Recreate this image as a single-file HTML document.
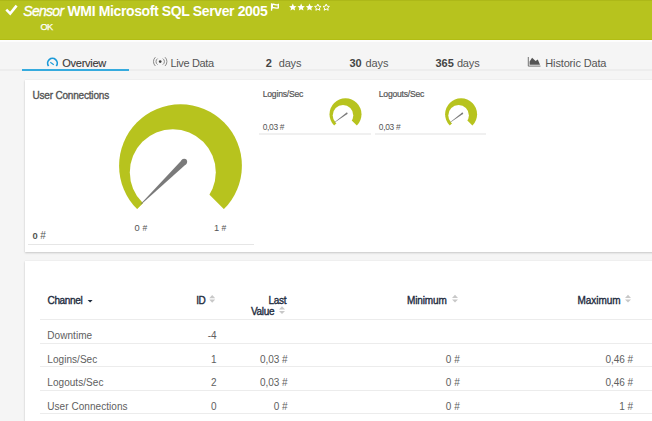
<!DOCTYPE html>
<html><head><meta charset="utf-8">
<style>
html,body{margin:0;padding:0;}
body{width:652px;height:421px;overflow:hidden;position:relative;background:#f5f5f5;font-family:"Liberation Sans",sans-serif;}
.t{position:absolute;white-space:nowrap;}
#hdr{position:absolute;left:0;top:0;width:652px;height:40px;background:#b7c31e;}
.card{position:absolute;background:#fff;box-shadow:0 1px 2px rgba(0,0,0,0.18),0 0 1px rgba(0,0,0,0.08);}
.ln{position:absolute;height:1px;background:#e6e6e6;}
svg{position:absolute;left:0;top:0;}
</style></head><body>
<div id="hdr"></div><div style="position:absolute;left:0;top:0;width:652px;height:1px;background:#adb818"></div><div style="position:absolute;left:0;top:39px;width:652px;height:1px;background:#b2bd14"></div><div style="position:absolute;left:0;top:40px;width:652px;height:2px;background:#fdfdfd"></div>
<svg width="652" height="421" style="z-index:2"><polyline points="6.3,9.6 10.2,13.6 16.6,5.6" fill="none" stroke="#fff" stroke-width="2.6"/></svg>
<div class="t" style="top:3.95px;font-size:14px;line-height:14px;color:#fff;-webkit-text-stroke:0.35px #fff;font-style:italic;letter-spacing:-0.72px;left:23.30px;">Sensor</div>
<div class="t" style="top:3.75px;font-size:14px;line-height:14px;color:#fff;font-weight:bold;letter-spacing:-0.37px;left:67.50px;">WMI Microsoft SQL Server 2005</div>
<div class="t" style="top:22.51px;font-size:9.2px;line-height:9.2px;color:#fff;-webkit-text-stroke:0.25px #fff;letter-spacing:-0.55px;left:40.50px;">OK</div>
<svg width="652" height="421" style="z-index:4"><rect x="270.9" y="3.3" width="1.3" height="7.4" fill="#fff"/><path d="M272.3,4.5 C274.3,3.6 276,5.6 278.3,4.6 V7.9 C276,8.9 274.3,6.9 272.3,7.9 Z" fill="none" stroke="#fff" stroke-width="1.4"/><polygon points="292.80,3.50 293.89,5.90 296.51,6.19 294.56,7.97 295.09,10.56 292.80,9.25 290.51,10.56 291.04,7.97 289.09,6.19 291.71,5.90" fill="#fff"/><polygon points="301.15,3.50 302.24,5.90 304.86,6.19 302.91,7.97 303.44,10.56 301.15,9.25 298.86,10.56 299.39,7.97 297.44,6.19 300.06,5.90" fill="#fff"/><polygon points="309.50,3.50 310.59,5.90 313.21,6.19 311.26,7.97 311.79,10.56 309.50,9.25 307.21,10.56 307.74,7.97 305.79,6.19 308.41,5.90" fill="#fff"/><polygon points="317.85,4.10 318.79,6.21 321.08,6.45 319.37,7.99 319.85,10.25 317.85,9.10 315.85,10.25 316.33,7.99 314.62,6.45 316.91,6.21" fill="none" stroke="#fff" stroke-width="1"/><polygon points="326.20,4.10 327.14,6.21 329.43,6.45 327.72,7.99 328.20,10.25 326.20,9.10 324.20,10.25 324.68,7.99 322.97,6.45 325.26,6.21" fill="none" stroke="#fff" stroke-width="1"/><path d="M48.6,66 A4.8,4.8 0 1 1 56.3,66" fill="none" stroke="#1c9ad8" stroke-width="1.7" transform="translate(0,0)"/><line x1="50.3" y1="62.3" x2="53.8" y2="64.8" stroke="#1c9ad8" stroke-width="1.1"/><circle cx="160.2" cy="61.6" r="1.35" fill="#444"/><path d="M157.6,58.6 A3.6,3.6 0 0 0 157.6,64.6 M162.8,58.6 A3.6,3.6 0 0 1 162.8,64.6" fill="none" stroke="#777" stroke-width="0.85"/><path d="M155.4,57.2 A6,6 0 0 0 155.4,66 M165,57.2 A6,6 0 0 1 165,66" fill="none" stroke="#777" stroke-width="0.85"/><path d="M528.3,57 V66.1 H540.5" fill="none" stroke="#666" stroke-width="0.9"/><path d="M529.6,64.8 V61.5 L532.1,57.8 L535.6,61 L537.8,59.6 L540,64.8 Z" fill="#555"/></svg>
<div class="ln" style="left:0;top:69px;width:652px;height:2px;background:#ededed"></div>
<div style="position:absolute;left:22px;top:69px;width:107px;height:2px;background:#36abde"></div>
<div class="t" style="top:58.39px;font-size:11px;line-height:11px;color:#3a3a3a;-webkit-text-stroke:0.12px currentColor;letter-spacing:-0.27px;left:62.30px;">Overview</div>
<div class="t" style="top:58.39px;font-size:11px;line-height:11px;color:#555;letter-spacing:-0.35px;left:170.40px;">Live Data</div>
<div class="t" style="top:58.39px;font-size:11px;line-height:11px;color:#444;font-weight:bold;left:265.80px;">2</div>
<div class="t" style="top:58.39px;font-size:11px;line-height:11px;color:#555;letter-spacing:-0.15px;left:278.70px;">days</div>
<div class="t" style="top:58.39px;font-size:11px;line-height:11px;color:#444;font-weight:bold;left:349.50px;">30</div>
<div class="t" style="top:58.39px;font-size:11px;line-height:11px;color:#555;letter-spacing:-0.15px;left:365.60px;">days</div>
<div class="t" style="top:58.39px;font-size:11px;line-height:11px;color:#444;font-weight:bold;left:435.40px;">365</div>
<div class="t" style="top:58.39px;font-size:11px;line-height:11px;color:#555;letter-spacing:-0.15px;left:456.90px;">days</div>
<div class="t" style="top:58.39px;font-size:11px;line-height:11px;color:#555;letter-spacing:-0.15px;left:545.30px;">Historic Data</div>
<div class="card" style="left:25px;top:80px;width:640px;height:172px"></div>
<div class="card" style="left:25px;top:261px;width:640px;height:180px"></div>
<div class="t" style="top:90.73px;font-size:10px;line-height:10px;color:#555;-webkit-text-stroke:0.35px currentColor;letter-spacing:-0.19px;left:32.50px;">User Connections</div>
<div class="t" style="top:231.44px;font-size:9.4px;line-height:9.4px;color:#555;font-weight:bold;left:32.40px;">0</div>
<div class="t" style="top:230.94px;font-size:10px;line-height:10px;color:#555;left:40.30px;">#</div>
<div class="t" style="top:224.33px;font-size:9.3px;line-height:9.3px;color:#555;left:134.50px;">0</div>
<div class="t" style="top:224.22px;font-size:8.6px;line-height:8.6px;color:#555;left:142.40px;">#</div>
<div class="t" style="top:224.33px;font-size:9.3px;line-height:9.3px;color:#555;left:213.90px;">1</div>
<div class="t" style="top:224.22px;font-size:8.6px;line-height:8.6px;color:#555;left:221.40px;">#</div>
<div class="ln" style="left:28px;top:244px;width:226px;height:1px;background:#e6e6e6;"></div>
<div class="t" style="top:89.82px;font-size:8.6px;line-height:8.6px;color:#555;-webkit-text-stroke:0.2px currentColor;letter-spacing:-0.2px;left:262.70px;">Logins/Sec</div>
<div class="t" style="top:122.89px;font-size:8.4px;line-height:8.4px;color:#555;letter-spacing:-0.3px;left:262.70px;">0,03 #</div>
<div class="ln" style="left:259px;top:133px;width:112px;height:2px;background:#f0f0f0;"></div>
<div class="t" style="top:89.82px;font-size:8.6px;line-height:8.6px;color:#555;-webkit-text-stroke:0.2px currentColor;letter-spacing:-0.22px;left:378.80px;">Logouts/Sec</div>
<div class="t" style="top:122.89px;font-size:8.4px;line-height:8.4px;color:#555;letter-spacing:-0.3px;left:378.80px;">0,03 #</div>
<div class="ln" style="left:375px;top:133px;width:111px;height:2px;background:#f0f0f0;"></div>
<svg width="652" height="421" style="z-index:3"><clipPath id="c180"><polygon points="180.50,165.70 82.26,263.94 57.70,288.50 57.70,42.90 303.30,42.90 303.30,288.50 278.74,263.94"/></clipPath><g clip-path="url(#c180)"><circle cx="180.5" cy="165.7" r="61.4" fill="#b7c31e"/></g><circle cx="172.80" cy="172.20" r="43.00" fill="#fff"/><polygon points="141.01,204.41 186.26,163.91 182.14,159.69 140.59,203.99" fill="#7a7a7a"/><circle cx="184.20" cy="161.80" r="2.95" fill="#7a7a7a"/><clipPath id="c345"><polygon points="345.50,114.20 319.90,139.80 313.50,146.20 313.50,82.20 377.50,82.20 377.50,146.20 371.10,139.80"/></clipPath><g clip-path="url(#c345)"><circle cx="345.5" cy="114.2" r="16" fill="#b7c31e"/></g><circle cx="343.00" cy="115.40" r="10.30" fill="#fff"/><polygon points="334.75,122.60 347.27,114.04 346.33,112.76 334.45,122.20" fill="#7a7a7a"/><circle cx="346.80" cy="113.40" r="0.80" fill="#7a7a7a"/><clipPath id="c461"><polygon points="461.10,114.20 435.50,139.80 429.10,146.20 429.10,82.20 493.10,82.20 493.10,146.20 486.70,139.80"/></clipPath><g clip-path="url(#c461)"><circle cx="461.1" cy="114.2" r="16" fill="#b7c31e"/></g><circle cx="458.60" cy="115.40" r="10.30" fill="#fff"/><polygon points="450.35,122.60 462.87,114.04 461.93,112.76 450.05,122.20" fill="#7a7a7a"/><circle cx="462.40" cy="113.40" r="0.80" fill="#7a7a7a"/></svg>
<div class="t" style="top:295.94px;font-size:10px;line-height:10px;color:#1d2b3e;-webkit-text-stroke:0.35px currentColor;letter-spacing:-0.34px;left:47.50px;">Channel</div>
<div class="t" style="top:295.94px;font-size:10px;line-height:10px;color:#1d2b3e;-webkit-text-stroke:0.35px currentColor;letter-spacing:-0.5px;left:196.20px;">ID</div>
<div class="t" style="top:295.94px;font-size:10px;line-height:10px;color:#1d2b3e;-webkit-text-stroke:0.35px currentColor;letter-spacing:-0.22px;right:365.60px;">Last</div>
<div class="t" style="top:307.14px;font-size:10px;line-height:10px;color:#1d2b3e;-webkit-text-stroke:0.35px currentColor;letter-spacing:-0.32px;right:377.80px;">Value</div>
<div class="t" style="top:296.14px;font-size:10px;line-height:10px;color:#1d2b3e;-webkit-text-stroke:0.35px currentColor;letter-spacing:-0.09px;left:406.90px;">Minimum</div>
<div class="t" style="top:296.14px;font-size:10px;line-height:10px;color:#1d2b3e;-webkit-text-stroke:0.35px currentColor;letter-spacing:-0.06px;left:577.60px;">Maximum</div>
<svg width="652" height="421" style="z-index:3"><polygon points="87.6,300 92.6,300 90.1,302.6" fill="#1d2b3e"/><polygon points="209.2,298.2 212.2,295.0 215.2,298.2" fill="#c8c8c8"/><polygon points="209.2,299.6 212.2,302.8 215.2,299.6" fill="#c8c8c8"/><polygon points="279.0,309.5 282.0,306.3 285.0,309.5" fill="#c8c8c8"/><polygon points="279.0,310.9 282.0,314.1 285.0,310.9" fill="#c8c8c8"/><polygon points="452.0,298.0 455.0,294.8 458.0,298.0" fill="#c8c8c8"/><polygon points="452.0,299.4 455.0,302.6 458.0,299.4" fill="#c8c8c8"/><polygon points="625.0,298.0 628.0,294.8 631.0,298.0" fill="#c8c8c8"/><polygon points="625.0,299.4 628.0,302.6 631.0,299.4" fill="#c8c8c8"/></svg>
<div class="ln" style="left:40px;top:319px;width:620px;background:#ececec"></div>
<div class="ln" style="left:40px;top:343px;width:620px;background:#ececec"></div>
<div class="ln" style="left:40px;top:366px;width:620px;background:#ececec"></div>
<div class="ln" style="left:40px;top:390px;width:620px;background:#ececec"></div>
<div class="ln" style="left:40px;top:413px;width:620px;background:#ececec"></div>
<div class="t" style="top:331.04px;font-size:10px;line-height:10px;color:#606060;letter-spacing:0.05px;left:47.30px;">Downtime</div>
<div class="t" style="top:331.04px;font-size:10px;line-height:10px;color:#606060;right:435.40px;">-4</div>
<div class="t" style="top:354.54px;font-size:10px;line-height:10px;color:#606060;letter-spacing:0.05px;left:47.30px;">Logins/Sec</div>
<div class="t" style="top:354.54px;font-size:10px;line-height:10px;color:#606060;right:435.40px;">1</div>
<div class="t" style="top:354.54px;font-size:10px;line-height:10px;color:#606060;letter-spacing:-0.05px;right:364.60px;">0,03 #</div>
<div class="t" style="top:354.54px;font-size:10px;line-height:10px;color:#606060;letter-spacing:0.1px;right:192.00px;">0 #</div>
<div class="t" style="top:354.54px;font-size:10px;line-height:10px;color:#606060;letter-spacing:-0.05px;right:19.00px;">0,46 #</div>
<div class="t" style="top:378.04px;font-size:10px;line-height:10px;color:#606060;letter-spacing:0.05px;left:47.30px;">Logouts/Sec</div>
<div class="t" style="top:378.04px;font-size:10px;line-height:10px;color:#606060;right:435.40px;">2</div>
<div class="t" style="top:378.04px;font-size:10px;line-height:10px;color:#606060;letter-spacing:-0.05px;right:364.60px;">0,03 #</div>
<div class="t" style="top:378.04px;font-size:10px;line-height:10px;color:#606060;letter-spacing:0.1px;right:192.00px;">0 #</div>
<div class="t" style="top:378.04px;font-size:10px;line-height:10px;color:#606060;letter-spacing:-0.05px;right:19.00px;">0,46 #</div>
<div class="t" style="top:401.54px;font-size:10px;line-height:10px;color:#606060;letter-spacing:0.05px;left:47.30px;">User Connections</div>
<div class="t" style="top:401.54px;font-size:10px;line-height:10px;color:#606060;right:435.40px;">0</div>
<div class="t" style="top:401.54px;font-size:10px;line-height:10px;color:#606060;letter-spacing:-0.05px;right:364.60px;">0 #</div>
<div class="t" style="top:401.54px;font-size:10px;line-height:10px;color:#606060;letter-spacing:0.1px;right:192.00px;">0 #</div>
<div class="t" style="top:401.54px;font-size:10px;line-height:10px;color:#606060;letter-spacing:-0.05px;right:19.00px;">1 #</div>
</body></html>
